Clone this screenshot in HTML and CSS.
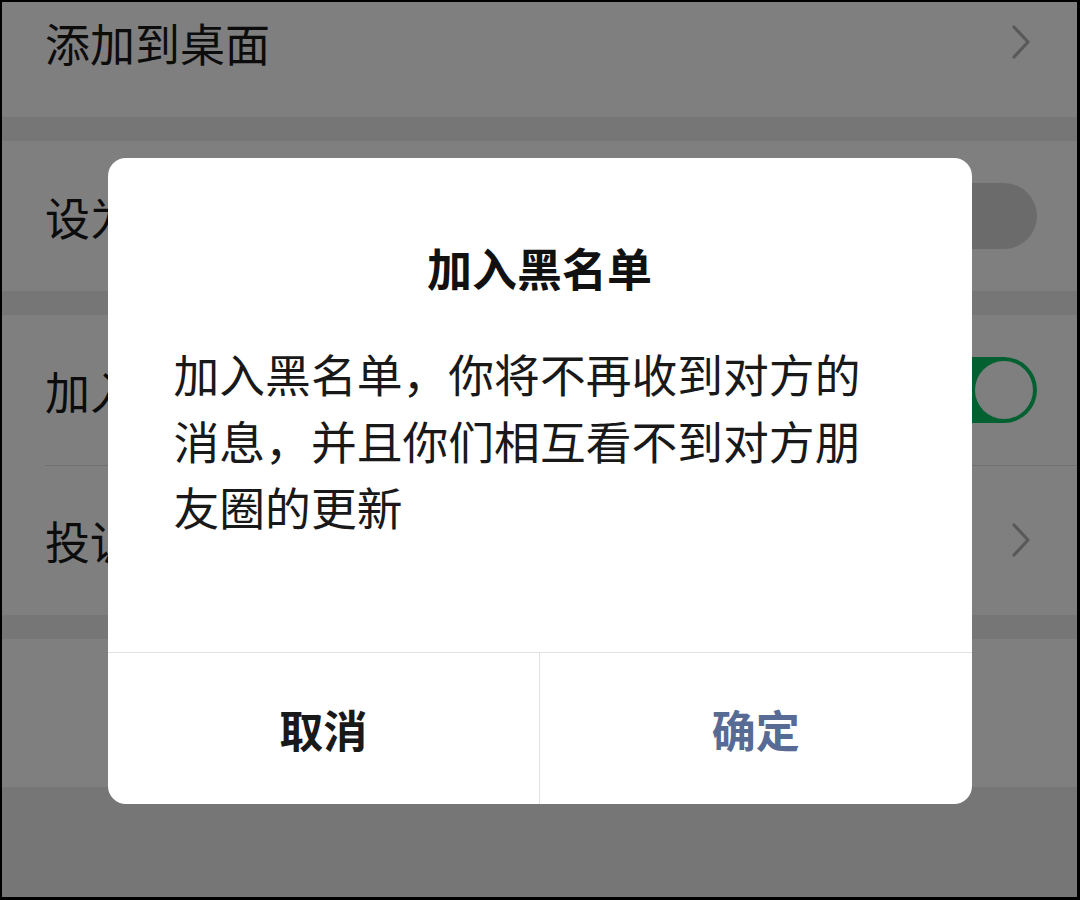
FILE: index.html
```html
<!DOCTYPE html>
<html lang="zh-CN">
<head>
<meta charset="utf-8">
<title>加入黑名单</title>
<link rel="stylesheet" href="styles.css">
</head>
<body>
<div class="screen">
  <div class="list">
    <div class="row">
      <span class="label">添加到桌面</span>
      <svg class="chev" viewBox="0 0 20 34" width="20" height="34"><path d="M3 2 L17 17 L3 32" fill="none" stroke="#b2b2b2" stroke-width="3.2" stroke-linecap="round" stroke-linejoin="round"/></svg>
    </div>
    <div class="gap"></div>
    <div class="row">
      <span class="label">设为星标朋友</span>
      <span class="switch"><span class="knob"></span></span>
    </div>
    <div class="gap"></div>
    <div class="row">
      <span class="label">加入黑名单</span>
      <span class="switch on"><span class="knob"></span></span>
    </div>
    <div class="row divided">
      <span class="label">投诉</span>
      <svg class="chev" viewBox="0 0 20 34" width="20" height="34"><path d="M3 2 L17 17 L3 32" fill="none" stroke="#b2b2b2" stroke-width="3.2" stroke-linecap="round" stroke-linejoin="round"/></svg>
    </div>
    <div class="gap"></div>
    <div class="row danger">
      <span class="del">删除</span>
    </div>
  </div>

  <div class="mask">
    <div class="dialog">
      <div class="title">加入黑名单</div>
      <div class="content">加入黑名单，你将不再收到对方的消息，并且你们相互看不到对方朋友圈的更新</div>
      <div class="actions">
        <div class="btn cancel">取消</div>
        <div class="btn ok">确定</div>
      </div>
    </div>
  </div>
</div>
</body>
</html>
```

FILE: styles.css
```css
html, body {
  margin: 0;
  padding: 0;
  background: #000;
}
body {
  width: 1080px;
  height: 900px;
  overflow: hidden;
  font-family: "Noto Sans CJK SC", "Noto Sans", sans-serif;
}
.screen {
  position: relative;
  margin: 2px 3px 3px 2px;
  width: 1075px;
  height: 895px;
  background: #ededed;
  overflow: hidden;
}
.list {
  display: flex;
  flex-direction: column;
  margin-top: -35px;
}
.row {
  height: 150px;
  background: #fff;
  display: flex;
  align-items: center;
  justify-content: space-between;
  padding: 0 40px 0 43px;
  box-sizing: border-box;
  position: relative;
}
.row.divided::before {
  content: "";
  position: absolute;
  left: 43px;
  right: 0;
  top: 0;
  border-top: 1px solid #e2e2e2;
}
.gap {
  height: 24px;
}
.label {
  font-size: 45px;
  color: #191919;
  line-height: 1;
}
.chev {
  margin-right: 6px;
}
.switch {
  width: 106px;
  height: 66px;
  border-radius: 33px;
  background: #d6d6d6;
  position: relative;
  display: block;
}
.switch .knob {
  display: none;
}
.switch.on {
  background: #07c160;
}
.switch.on .knob {
  display: block;
  position: absolute;
  right: 4px;
  top: 4px;
  width: 58px;
  height: 58px;
  border-radius: 50%;
  background: #fff;
}
.row.danger {
  height: 148px;
  justify-content: center;
}
.del {
  font-size: 45px;
  color: #fa5151;
  font-weight: 700;
}
.mask {
  position: absolute;
  inset: 0;
  background: rgba(0, 0, 0, 0.5);
  display: flex;
  justify-content: center;
  align-items: flex-start;
  padding-top: 156px;
  box-sizing: border-box;
}
.dialog {
  width: 864px;
  height: 646px;
  background: #fff;
  border-radius: 18px;
  display: flex;
  flex-direction: column;
  overflow: hidden;
}
.title {
  margin-top: 78px;
  text-align: center;
  font-size: 45px;
  line-height: 63px;
  font-weight: 700;
  color: #111;
}
.content {
  margin-top: 41px;
  padding: 0 78px 0 66px;
  font-size: 45.8px;
  line-height: 66.5px;
  color: #191919;
  flex: 1;
}
.actions {
  display: flex;
  height: 151px;
  border-top: 1px solid #e2e2e2;
}
.btn {
  flex: 1;
  display: flex;
  align-items: center;
  justify-content: center;
  font-size: 44px;
  font-weight: 700;
}
.btn.cancel {
  color: #191919;
  border-right: 1px solid #e2e2e2;
}
.btn.ok {
  color: #576b95;
}
```
